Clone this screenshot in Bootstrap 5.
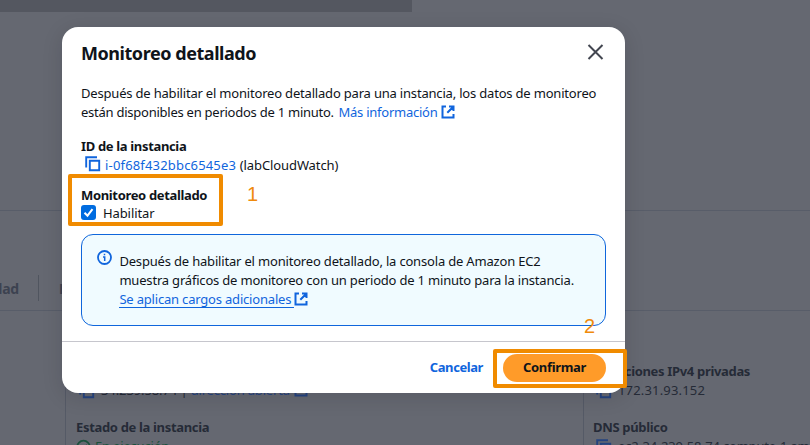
<!DOCTYPE html>
<html lang="es">
<head>
<meta charset="utf-8">
<title>Monitoreo detallado</title>
<link href="https://cdn.jsdelivr.net/npm/bootstrap@5.3.0/dist/css/bootstrap.min.css" rel="stylesheet">
<style>
body{font-family:"Noto Sans","Open Sans",sans-serif;font-size:13px;line-height:19px;color:#0f141a;width:810px;height:445px;letter-spacing:-.19px}
.page{width:810px;height:445px;background:#656871;color:#252b37}
.page-strip{height:12px;width:412px;background:#545760}
.summary-pane{height:199px;border-bottom:1px solid #585d69}
.tabs-pane{height:100px;padding-top:64px;border-bottom:1px solid #585d69;font-size:14px;font-weight:700;color:#3c4250}
.tab-one{width:39px;height:26px;line-height:28px;border-right:1px solid #50555f;padding-right:19px;overflow:hidden;white-space:nowrap}
.tab-two{height:26px;line-height:28px;padding-left:20px}
.details-pane{margin-top:20px;height:114px;padding-left:65px}
.col-a{width:518px;border-left:1px solid #555a66;padding:31px 0 0 10px}
.col-b{width:227px;border-left:1px solid #555a66;padding:31px 0 0 9px}
.dim-row{height:19px;white-space:nowrap}
.dim-row.fw-bold{letter-spacing:-.33px}
.dim-gap{height:18px}
.dim-blue{color:#25437f}
.dim-green{color:#1c513d}
.numeric{letter-spacing:.17px}
.public-ip{letter-spacing:-.1px}
.dim-icon{margin:2px 6px 0 3px}
.dialog-layer{left:62px;top:27px;width:563px;height:366px;border:0;border-radius:16px;box-shadow:0 4px 20px 1px rgba(0,7,22,.12);background:#fff}
.dialog-head{height:57px;padding:16px 18px 0 19px}
.dialog-title{font-size:18px;line-height:20px;font-weight:700;letter-spacing:-.45px}
.dialog-main{height:258px;padding:0 19px;border-bottom:1px solid #c6c6cd}
.line{white-space:nowrap;height:19px}
.link{color:#1065dd}
.link-tight{letter-spacing:-.25px}
.more-link{margin-left:1.5px}
.ext-icon{margin-top:2px}
.key{font-weight:700;height:18px;line-height:18px;white-space:nowrap;letter-spacing:-.34px}
.key-id{margin-top:15px}
.id-line{padding-top:1px;height:20px}
.id-name{letter-spacing:-.1px;margin-left:.5px}
.key-monitor{margin-top:11px}
.info-box{margin-top:11px;height:92px;border:1px solid #0f66dc;border-radius:12px;background:#f0fbff;padding:15px}
.info-text{padding-top:2px;margin-left:7.4px}
.info-first{letter-spacing:-.18px}
.info-link{border-bottom:1px solid #1065dd;padding-right:3px;height:18px}
.tick{width:15px;height:15px;margin-top:1px}
.tick-label{margin-left:7px;letter-spacing:-.1px}
.dialog-actions{padding:12px 19px 0 0}
.confirm{width:103px;height:28px;border-radius:14px;background:#ff9b29;font-weight:700;line-height:27px;letter-spacing:-.33px}
.cancel{font-weight:700;line-height:27px;letter-spacing:-.42px;margin-right:20px}
.mark-frame{border:4px solid #f08b00;border-radius:2px}
.frame-1{left:68px;top:174px;width:155px;height:52px}
.frame-2{left:493px;top:349px;width:134px;height:39px}
.mark-num{font:20px/22px "Liberation Sans",Arial,sans-serif;color:#ef8a0c;letter-spacing:0}
.num-1{left:247px;top:183px}
.num-2{left:584px;top:315px}
svg{display:block;flex:none}
</style>
<script src="https://cdn.jsdelivr.net/npm/bootstrap@5.3.0/dist/js/bootstrap.bundle.min.js"></script>
</head>
<body class="position-relative overflow-hidden">
<svg width="0" height="0" class="position-absolute">
<symbol id="copy" viewBox="0 0 16 16"><path d="M1.2 11.6V1.2H12M4.8 4.8h9.4v9.4H4.8z" fill="none" stroke="currentColor" stroke-width="1.9"/></symbol>
<symbol id="ext" viewBox="0 0 14 14"><path d="M5 1.5H1.5v11h11V9M8 1.5h4.5V6M12.3 1.7 6.3 7.7" fill="none" stroke="currentColor" stroke-width="2"/></symbol>
</svg>
<div class="page overflow-hidden">
  <div class="page-strip"></div>
  <div class="summary-pane"></div>
  <div class="tabs-pane d-flex"><div class="tab-one d-flex justify-content-end">Seguridad</div><div class="tab-two">Redes</div></div>
  <div class="details-pane d-flex">
    <div class="col-a">
      <div class="dim-row fw-bold">Dirección IPv4 pública</div>
      <div class="dim-row d-flex"><svg class="dim-blue dim-icon" width="16" height="16"><use href="#copy"/></svg><span class="public-ip">34.239.58.74 |</span>&nbsp;<span class="dim-blue">dirección abierta</span><svg class="dim-blue ext-icon ms-1" width="14" height="14"><use href="#ext"/></svg></div>
      <div class="dim-gap"></div>
      <div class="dim-row fw-bold">Estado de la instancia</div>
      <div class="dim-row d-flex dim-green"><svg class="me-1 ext-icon" width="15" height="16" viewBox="0 0 15 16"><circle cx="7.5" cy="8" r="6.3" fill="none" stroke="currentColor" stroke-width="1.8"/><path d="m4 8 2.5 2.5L11 6" fill="none" stroke="currentColor" stroke-width="1.8"/></svg><span>En ejecución</span></div>
    </div>
    <div class="col-b">
      <div class="dim-row fw-bold">Direcciones IPv4 privadas</div>
      <div class="dim-row d-flex"><svg class="dim-blue dim-icon" width="16" height="16"><use href="#copy"/></svg><span class="numeric">172.31.93.152</span></div>
      <div class="dim-gap"></div>
      <div class="dim-row fw-bold">DNS público</div>
      <div class="dim-row d-flex"><svg class="dim-blue dim-icon" width="16" height="16"><use href="#copy"/></svg><span>ec2-34-239-58-74.compute-1.am</span></div>
    </div>
  </div>
</div>
<div class="dialog-layer modal-content position-absolute">
  <div class="dialog-head d-flex justify-content-between">
    <div class="dialog-title">Monitoreo detallado</div>
    <svg width="22" height="22" viewBox="0 0 22 22"><path d="m3.5 2 14 14M17.5 2l-14 14" stroke="#424650" stroke-width="2"/></svg>
  </div>
  <div class="dialog-main">
    <div class="line">Después de habilitar el monitoreo detallado para una instancia, los datos de monitoreo</div>
    <div class="line d-flex link-tight"><span>están disponibles en periodos de 1 minuto.</span>&nbsp;<span class="link more-link">Más información</span><svg class="link ext-icon ms-1" width="14" height="14"><use href="#ext"/></svg></div>
    <div class="key key-id">ID de la instancia</div>
    <div class="line id-line d-flex"><svg class="link ms-1 me-1" width="16" height="16"><use href="#copy"/></svg><span class="link numeric">i-0f68f432bbc6545e3</span>&nbsp;<span class="id-name">(labCloudWatch)</span></div>
    <div class="key key-monitor">Monitoreo detallado</div>
    <div class="line d-flex"><svg class="tick" viewBox="0 0 15 15"><rect width="15" height="15" rx="3" fill="#006ce0"/><path d="m3.5 7.7 3 3 5-6.5" fill="none" stroke="#fff" stroke-width="2"/></svg><span class="tick-label">Habilitar</span></div>
    <div class="info-box d-flex">
      <svg class="link" width="15" height="15" viewBox="0 0 15 15"><circle cx="7.5" cy="7.5" r="6.5" fill="none" stroke="currentColor" stroke-width="1.8"/><path d="M7.5 3.7v1.6M6 7h1.7v4" stroke="currentColor" fill="none" stroke-width="1.5"/></svg>
      <div class="info-text">
        <div class="line info-first">Después de habilitar el monitoreo detallado, la consola de Amazon EC2</div>
        <div class="line">muestra gráficos de monitoreo con un periodo de 1 minuto para la instancia.</div>
        <div class="line d-flex"><span class="link info-link">Se aplican cargos adicionales</span><svg class="link ext-icon" width="14" height="14"><use href="#ext"/></svg></div>
      </div>
    </div>
  </div>
  <div class="dialog-actions d-flex justify-content-end"><span class="cancel link">Cancelar</span><span class="confirm text-center">Confirmar</span></div>
</div>
<div class="mark-frame frame-1 position-absolute"></div>
<div class="mark-frame frame-2 position-absolute"></div>
<div class="mark-num num-1 position-absolute">1</div>
<div class="mark-num num-2 position-absolute">2</div>
</body>
</html>
